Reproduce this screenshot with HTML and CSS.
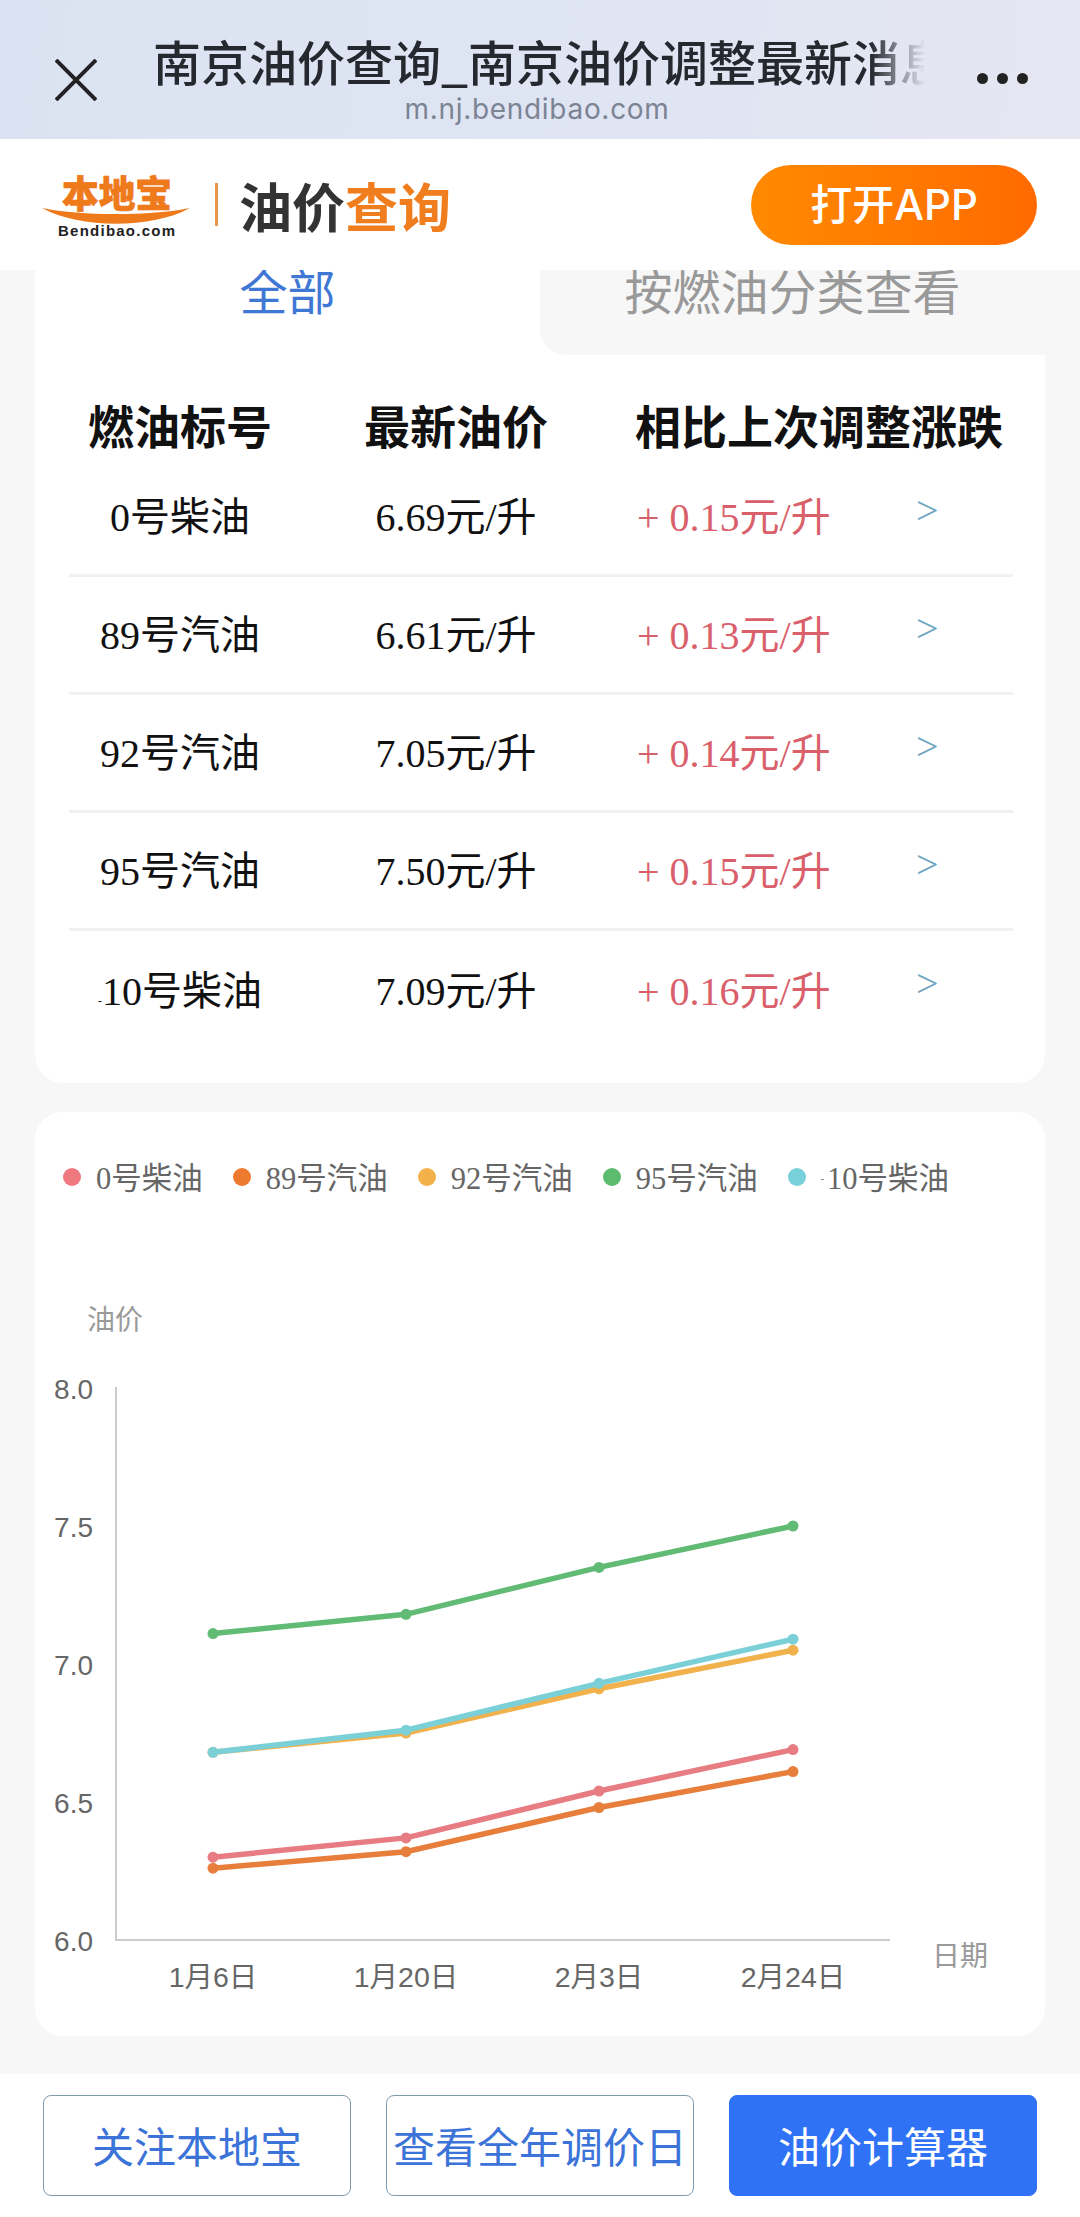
FILE: index.html
```html
<!DOCTYPE html>
<html lang="zh-CN">
<head>
  <meta charset="UTF-8" />
  <meta name="viewport" content="width=device-width, initial-scale=1.0" />
  <title>南京油价查询</title>
  <link rel="stylesheet" href="styles.css">
</head>
<body>

<section class="top-bar">
  <svg class="close-icon" viewBox="0 0 42 42" width="42" height="42">
    <path d="M1 1 L41 41 M41 1 L1 41" />
  </svg>
  <div class="page-title">
    <div class="title-text">南京油价查询_南京油价调整最新消息</div>
    <div class="title-url">m.nj.bendibao.com</div>
  </div>
  <div class="more-dots"><i></i><i></i><i></i></div>
</section>

<header class="site-header">
  <svg class="logo" viewBox="0 0 148 68" width="148" height="68">
    <text class="logo-cn" x="20" y="37" textLength="110" lengthAdjust="spacingAndGlyphs">本地宝</text>
    <path class="logo-swoosh" d="M0 37 C40 45 108 45 148 37 C110 58 38 58 0 37 Z" />
    <text class="logo-en" x="16" y="65" textLength="117" lengthAdjust="spacing">Bendibao.com</text>
  </svg>
  <span class="header-rule"></span>
  <h1 class="header-title">油价<em>查询</em></h1>
  <a class="open-app">打开APP</a>
</header>

<main class="page">
  <section class="card price-card">
    <div class="tabs">
      <div class="tab tab-active">全部</div>
      <div class="tab tab-other">按燃油分类查看</div>
    </div>
    <div class="price-table">
      <div class="price-head">
        <span>燃油标号</span>
        <span>最新油价</span>
        <span>相比上次调整涨跌</span>
      </div>
      <div class="price-row">
        <span>0号柴油</span><span>6.69元/升</span><span class="rise">+ 0.15元/升</span><span class="go">&gt;</span>
      </div>
      <div class="price-row">
        <span>89号汽油</span><span>6.61元/升</span><span class="rise">+ 0.13元/升</span><span class="go">&gt;</span>
      </div>
      <div class="price-row">
        <span>92号汽油</span><span>7.05元/升</span><span class="rise">+ 0.14元/升</span><span class="go">&gt;</span>
      </div>
      <div class="price-row">
        <span>95号汽油</span><span>7.50元/升</span><span class="rise">+ 0.15元/升</span><span class="go">&gt;</span>
      </div>
      <div class="price-row">
        <span><small>-</small>10号柴油</span><span>7.09元/升</span><span class="rise">+ 0.16元/升</span><span class="go">&gt;</span>
      </div>
    </div>
  </section>

  <section class="card chart-card">
    <div class="legend">
      <span class="legend-item"><i class="dot-pink"></i>0号柴油</span>
      <span class="legend-item"><i class="dot-orange"></i>89号汽油</span>
      <span class="legend-item"><i class="dot-yellow"></i>92号汽油</span>
      <span class="legend-item"><i class="dot-green"></i>95号汽油</span>
      <span class="legend-item"><i class="dot-teal"></i><small>-</small>10号柴油</span>
    </div>

    <svg class="chart" viewBox="0 0 1010 744" width="1010" height="744">
      <text class="axis-name" x="52" y="38">油价</text>
      <text class="axis-name" x="897" y="674">日期</text>

      <path class="axis" d="M81 95 V648 H855" />

      <g class="tick-y">
        <text x="58" y="107">8.0</text>
        <text x="58" y="245">7.5</text>
        <text x="58" y="383">7.0</text>
        <text x="58" y="521">6.5</text>
        <text x="58" y="659">6.0</text>
      </g>
      <g class="tick-x">
        <text x="178" y="695">1月6日</text>
        <text x="371" y="695">1月20日</text>
        <text x="564" y="695">2月3日</text>
        <text x="758" y="695">2月24日</text>
      </g>

      <!-- y = 648 - (price - 6) * 276 -->
      <g class="series pink">
        <polyline points="178,565.2 371,545.9 564,499 758,457.6" />
        <circle cx="178" cy="565.2" r="5.5" /><circle cx="371" cy="545.9" r="5.5" /><circle cx="564" cy="499" r="5.5" /><circle cx="758" cy="457.6" r="5.5" />
      </g>
      <g class="series orange">
        <polyline points="178,576.2 371,559.7 564,515.5 758,479.6" />
        <circle cx="178" cy="576.2" r="5.5" /><circle cx="371" cy="559.7" r="5.5" /><circle cx="564" cy="515.5" r="5.5" /><circle cx="758" cy="479.6" r="5.5" />
      </g>
      <g class="series yellow">
        <polyline points="178,460.3 371,441 564,396.8 758,358.2" />
        <circle cx="178" cy="460.3" r="5.5" /><circle cx="371" cy="441" r="5.5" /><circle cx="564" cy="396.8" r="5.5" /><circle cx="758" cy="358.2" r="5.5" />
      </g>
      <g class="series green">
        <polyline points="178,341.6 371,322.3 564,275.4 758,234" />
        <circle cx="178" cy="341.6" r="5.5" /><circle cx="371" cy="322.3" r="5.5" /><circle cx="564" cy="275.4" r="5.5" /><circle cx="758" cy="234" r="5.5" />
      </g>
      <g class="series teal">
        <polyline points="178,460.3 371,438.2 564,391.3 758,347.2" />
        <circle cx="178" cy="460.3" r="5.5" /><circle cx="371" cy="438.2" r="5.5" /><circle cx="564" cy="391.3" r="5.5" /><circle cx="758" cy="347.2" r="5.5" />
      </g>
    </svg>
  </section>
</main>

<footer class="actions">
  <button class="btn">关注本地宝</button>
  <button class="btn">查看全年调价日</button>
  <button class="btn btn-solid">油价计算器</button>
</footer>

</body>
</html>
```

FILE: styles.css
```css
:root {
  --bg-page: #f7f7f7;
  --blue: #3b73d8;
  --orange: #f07d1e;
  --cjk: "Liberation Sans", "Noto Sans CJK SC", sans-serif;
  --cjk-serif: "Liberation Serif", "Noto Sans CJK SC", serif;
}

* {
  margin: 0;
  padding: 0;
  box-sizing: border-box;
}

body {
  background: var(--bg-page);
  font-family: var(--cjk);
  color: #222;
  width: 1080px;
  overflow-x: hidden;
}

/* browser title bar */
.top-bar {
  height: 139px;
  display: flex;
  align-items: flex-start;
  padding: 0 50px 0 55px;
  background: linear-gradient(100deg, #dbe2f1, #dfe5f3 55%, #e6e6f2);
}

.close-icon {
  margin-top: 59px;
  flex: none;
}

.close-icon path {
  stroke: #222;
  stroke-width: 4;
  fill: none;
}

.page-title {
  width: 772px;
  margin: 32px 0 0 56px;
  text-align: center;
}

.title-text {
  font-family: "Noto Sans CJK SC", sans-serif;
  font-size: 48px;
  font-weight: 500;
  line-height: 56px;
  white-space: nowrap;
  overflow: hidden;
  text-align: left;
  color: #25282e;
  -webkit-mask-image: linear-gradient(to right, #000 93%, transparent);
  mask-image: linear-gradient(to right, #000 93%, transparent);
}

.title-url {
  font-family: Inter, "Liberation Sans", sans-serif;
  font-size: 28px;
  line-height: 32px;
  letter-spacing: 0.7px;
  color: #7c8494;
  margin: 5px 0 0 -4px;
}

.more-dots {
  margin: 73px 2px 0 auto;
  display: flex;
  gap: 9px;
}

.more-dots i {
  width: 11px;
  height: 11px;
  border-radius: 50%;
  background: #222;
}

/* site header */
.site-header {
  height: 131px;
  background: #fff;
  display: flex;
  align-items: center;
  padding: 0 43px 0 42px;
}

.logo {
  flex: none;
}

.logo-cn {
  font-family: "Noto Sans CJK SC", sans-serif;
  font-weight: 900;
  font-size: 37px;
  fill: #ee7a1c;
  stroke: #ee7a1c;
  stroke-width: 0.7;
}

.logo-swoosh {
  fill: #ee7a1c;
}

.logo-en {
  font-family: "Liberation Sans", sans-serif;
  font-weight: 700;
  font-size: 15px;
  fill: #222;
}

.header-rule {
  width: 3px;
  height: 43px;
  margin: 0 21px 0 25px;
  background: #e89550;
}

.header-title {
  font-family: "Noto Sans CJK SC", sans-serif;
  font-size: 53px;
  font-weight: 700;
  color: #333;
}

.header-title em {
  font-style: normal;
  color: var(--orange);
}

.open-app {
  margin-left: auto;
  width: 286px;
  height: 80px;
  border-radius: 40px;
  background: linear-gradient(to right, #ff8a00, #ff6a00);
  color: #fff;
  font-family: Inter, "Noto Sans CJK SC", sans-serif;
  font-size: 42px;
  font-weight: 500;
  line-height: 80px;
  text-align: center;
}

/* cards */
.page {
  padding: 0 35px;
}

.card {
  background: #fff;
  border-radius: 28px;
}

.price-card {
  height: 813px;
  border-radius: 0 0 28px 28px;
  overflow: hidden;
}

.tabs {
  display: grid;
  grid-template-columns: 505px 505px;
  height: 85px;
}

.tab {
  font-family: "Noto Sans CJK SC", sans-serif;
  font-size: 48px;
  line-height: 38px;
  text-align: center;
}

.tab-active {
  color: #3f78d4;
}

.tab-other {
  color: #999;
  background: var(--bg-page);
  border-bottom-left-radius: 26px;
}

/* price table */
.price-table {
  padding: 0 32px 0 34px;
}

.price-head,
.price-row {
  display: grid;
  grid-template-columns: 222px 330px 280px 1fr;
  align-items: center;
}

.price-head {
  height: 104px;
  padding-top: 34px;
  font-family: "Noto Sans CJK SC", sans-serif;
  font-size: 46px;
  font-weight: 700;
  color: #111;
  text-align: center;
}

.price-head span:nth-child(3) {
  grid-column: 3 / 5;
  text-align: left;
  padding-left: 14px;
  white-space: nowrap;
}

.price-row {
  height: 118px;
  padding-bottom: 5px;
  border-bottom: 3px solid #f1f1f1;
  font-family: var(--cjk-serif);
  font-size: 40px;
  color: #111;
  text-align: center;
}

.price-row:last-child {
  border-bottom: none;
}

.price-row small {
  font-size: 12px;
}

.price-row .rise {
  text-align: left;
  padding-left: 16px;
  color: #d9606a;
}

.price-row .go {
  text-align: left;
  padding: 0 0 8px 15px;
  color: #6fa6bf;
}

/* chart */
.chart-card {
  height: 924px;
  margin-top: 29px;
}

.legend {
  height: 180px;
  padding: 44px 0 0 28px;
  display: flex;
  gap: 30px;
  font-family: var(--cjk-serif);
  font-size: 30.5px;
  line-height: 46px;
  color: #666;
}

.legend-item {
  display: flex;
  align-items: center;
  align-self: flex-start;
  white-space: nowrap;
}

.legend-item i {
  width: 18px;
  height: 18px;
  border-radius: 50%;
  margin: -4px 15px 0 0;
}

.legend-item small {
  font-size: 10px;
  margin-right: 3px;
}

.dot-pink { background: #f0797f; }
.dot-orange { background: #ee7a30; }
.dot-yellow { background: #f3b14a; }
.dot-green { background: #5dbb70; }
.dot-teal { background: #78d0da; }

.chart {
  display: block;
}

.chart text {
  font-family: var(--cjk);
}

.axis-name {
  font-size: 28px;
  fill: #999;
}

.axis {
  fill: none;
  stroke: #ccc;
  stroke-width: 2;
}

.tick-y text {
  font-size: 28px;
  fill: #666;
  text-anchor: end;
}

.tick-x text {
  font-size: 28.5px;
  fill: #666;
  text-anchor: middle;
}

.series polyline {
  fill: none;
  stroke-width: 5.5;
}

.pink polyline { stroke: #e77c82; }
.pink circle { fill: #e77c82; }
.orange polyline { stroke: #e87e3c; }
.orange circle { fill: #e87e3c; }
.yellow polyline { stroke: #f1b14c; }
.yellow circle { fill: #f1b14c; }
.green polyline { stroke: #62bb74; }
.green circle { fill: #62bb74; }
.teal polyline { stroke: #7bd0d8; }
.teal circle { fill: #7bd0d8; }

/* bottom buttons */
.actions {
  margin-top: 38px;
  height: 143px;
  padding: 21px 43px 0;
  background: #fff;
  display: grid;
  grid-template-columns: repeat(3, 308px);
  justify-content: space-between;
  align-items: start;
}

.btn {
  height: 101px;
  padding-bottom: 3px;
  border: 1px solid #7f9bb0;
  border-radius: 8px;
  background: #fff;
  color: var(--blue);
  font-family: "Noto Sans CJK SC", sans-serif;
  font-size: 42px;
  white-space: nowrap;
}

.btn-solid {
  background: #2f72f5;
  border-color: #2f72f5;
  color: #fff;
}
```
